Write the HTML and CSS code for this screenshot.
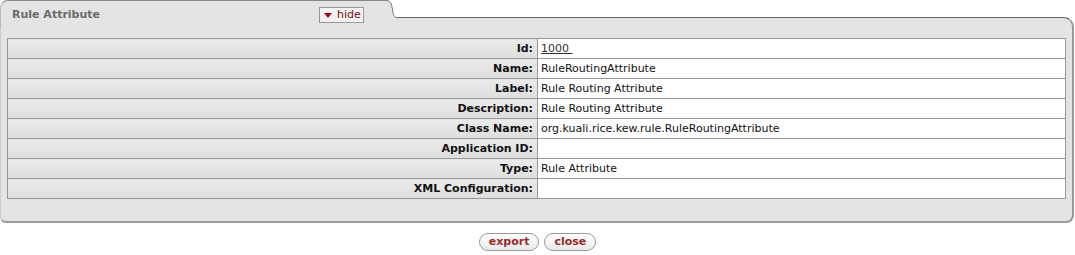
FILE: index.html
```html
<!DOCTYPE html>
<html lang="en">
<head>
  <meta charset="UTF-8">
  <title>Rule Attribute</title>
  <link rel="stylesheet" href="styles.css">
</head>
<body>
  <div class="panel">
    <div class="tabs">
      <div class="tab">
        <span class="tab-title">Rule Attribute</span>
        <button class="hide-btn"><span class="tri"></span>hide</button>
      </div>
      <svg class="tab-curve" width="12" height="28" viewBox="0 0 12 28">
        <path d="M0 0.5 C5 0.5 6 2 7 7 L8 12 C8.6 16 9.5 17.5 12 17.5 L12 28 L0 28 Z" fill="#e4e4e4"/>
        <path d="M0 0.5 C5 0.5 6 2 7 7 L8 12 C8.6 16 9.5 17.5 12 17.5" fill="none" stroke="#777" stroke-width="1"/>
      </svg>
      <div class="tab-rest"></div>
    </div>
    <div class="panel-body">
      <table class="attrs">
        <tr><th>Id:</th><td><a href="#" class="link">1000&nbsp;</a></td></tr>
        <tr><th>Name:</th><td>RuleRoutingAttribute</td></tr>
        <tr><th>Label:</th><td>Rule Routing Attribute</td></tr>
        <tr><th>Description:</th><td>Rule Routing Attribute</td></tr>
        <tr><th>Class Name:</th><td>org.kuali.rice.kew.rule.RuleRoutingAttribute</td></tr>
        <tr><th>Application ID:</th><td></td></tr>
        <tr><th>Type:</th><td>Rule Attribute</td></tr>
        <tr><th>XML Configuration:</th><td></td></tr>
      </table>
    </div>
  </div>

  <div class="actions">
    <button class="pill">export</button>
    <button class="pill">close</button>
  </div>
</body>
</html>
```

FILE: styles.css
```css
body {
  margin: 0;
  background: #fff;
  font-family: "DejaVu Sans", Verdana, sans-serif;
  font-size: 11px;
  color: #000;
}

.panel {
  width: 1074px;
}

.tabs {
  display: flex;
  height: 28px;
}

.tab {
  width: 385px;
  height: 28px;
  background: #e4e4e4;
  border-top: 1px solid #888;
  border-left: 1px solid #bbb;
  border-top-left-radius: 8px;
  display: flex;
  align-items: flex-start;
  justify-content: space-between;
  padding: 6px 21px 0 11px;
  box-sizing: border-box;
}

.tab-title {
  font-weight: bold;
  color: #6a6a6a;
  font-size: 11px;
  line-height: 15px;
}

.hide-btn {
  display: flex;
  align-items: center;
  gap: 5px;
  height: 16px;
  margin-top: 0;
  padding: 0 4px;
  border: 1px solid #999;
  background: #f2f2f2;
  color: #7a1010;
  font-family: "DejaVu Sans", Verdana, sans-serif;
  font-size: 11px;
  line-height: 14px;
  width: 45px;
}

.tri {
  width: 0;
  height: 0;
  border-left: 4px solid transparent;
  border-right: 4px solid transparent;
  border-top: 5px solid #9b1010;
}

.tab-curve {
  flex: none;
  display: block;
}

.tab-rest {
  flex: 1;
  margin-top: 17px;
  height: 11px;
  background: #e4e4e4;
  border-top: 1px solid #666;
  border-right: 2px solid #999;
  border-top-right-radius: 10px;
}

.panel-body {
  background: #e4e4e4;
  border-left: 1px solid #ccc;
  border-right: 2px solid #999;
  border-bottom: 2px solid #999;
  border-bottom-left-radius: 6px;
  border-bottom-right-radius: 8px;
  padding: 10px 6px 22px 6px;
}

.attrs {
  width: 100%;
  border-collapse: collapse;
  border: 1px solid #999;
}

.attrs th,
.attrs td {
  border: 1px solid #999;
  height: 19px;
  padding: 0 4px 0 3px;
  line-height: 19px;
}

.attrs th {
  width: 522px;
  text-align: right;
  font-weight: bold;
  color: #111;
  background: linear-gradient(#ebebeb, #dedede);
}

.attrs td {
  background: #fff;
  color: #111;
}

.link {
  color: #333;
  text-decoration: underline;
}

.actions {
  display: flex;
  justify-content: center;
  gap: 5px;
  margin-top: 10px;
}

.pill {
  height: 18px;
  padding: 0 9px;
  border: 1px solid #999;
  border-radius: 9px;
  background: linear-gradient(#fff, #eaeaea);
  color: #9a2a2a;
  font-family: "DejaVu Sans", Verdana, sans-serif;
  font-size: 11px;
  font-weight: bold;
  line-height: 16px;
}
```
